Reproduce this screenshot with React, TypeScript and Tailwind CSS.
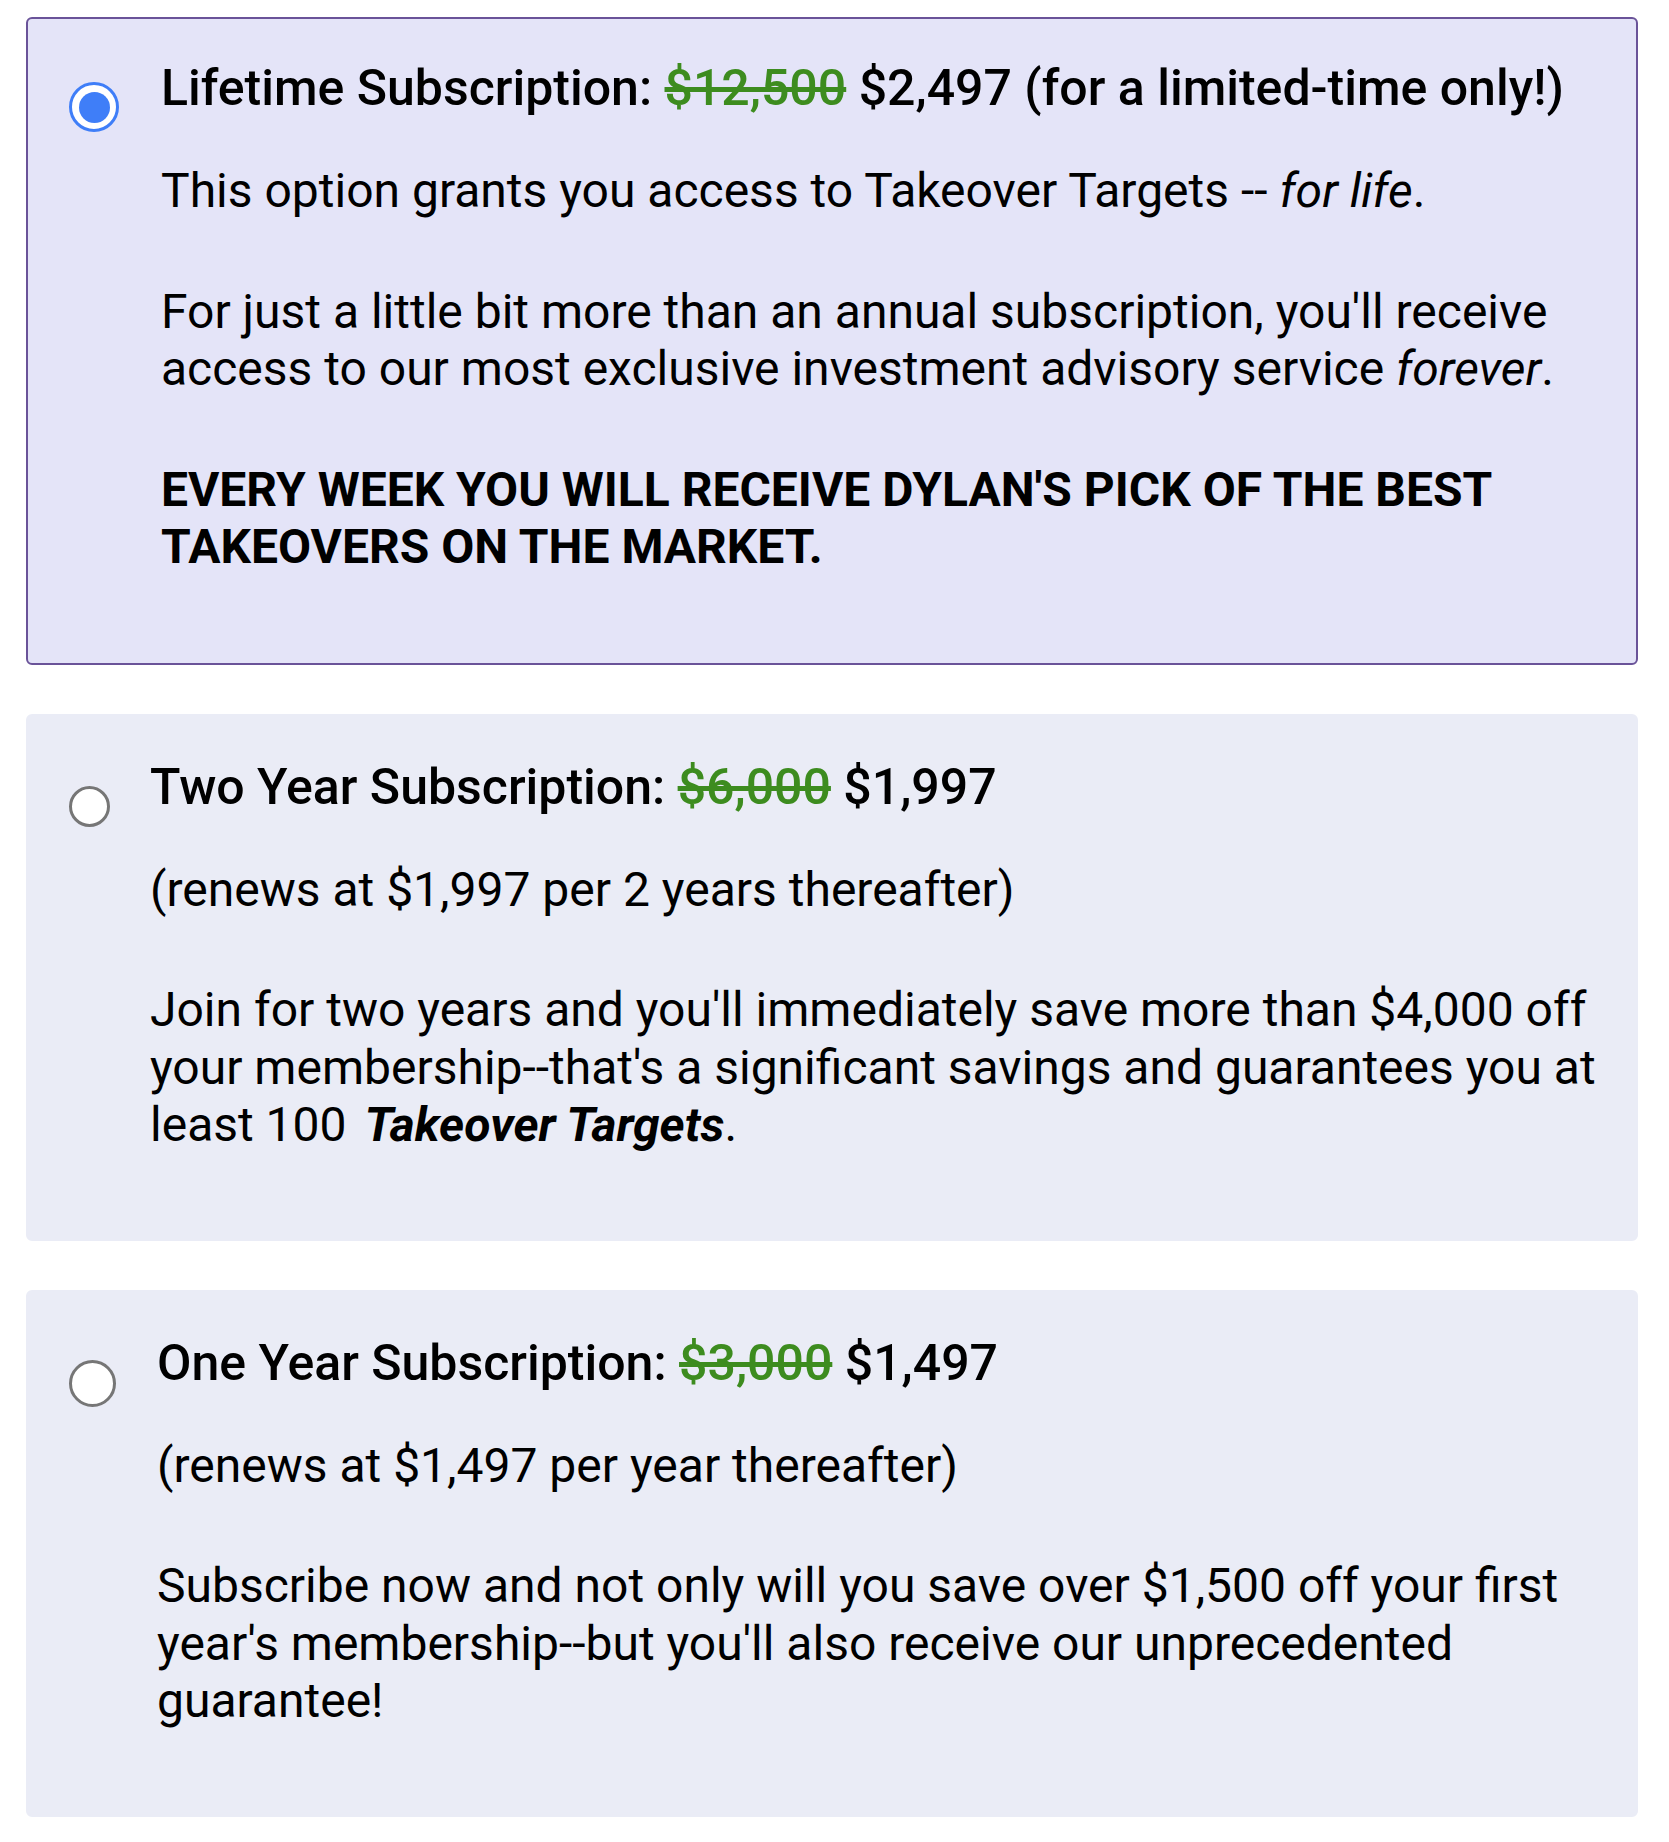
import { useState } from "react";

type Plan = {
  id: string;
  label: string;
  was: string;
  now: string;
  radio: string;
  body: React.ReactNode;
};

const plans: Plan[] = [
  {
    id: "lifetime",
    label: "Lifetime Subscription:",
    was: "$12,500",
    now: "$2,497 (for a limited-time only!)",
    radio: "w-[50px] h-[50px] mt-[23px] mr-[42px]",
    body: (
      <>
        <p>
          This option grants you access to Takeover Targets -- <em>for life</em>.
        </p>
        <p className="mt-[63px]">
          For just a little bit more than an annual subscription, you'll receive access to our most exclusive
          investment advisory service <em>forever</em>.
        </p>
        <p className="mt-[63px] font-bold">
          EVERY WEEK YOU WILL RECEIVE DYLAN'S PICK OF THE BEST TAKEOVERS ON THE MARKET.
        </p>
      </>
    ),
  },
  {
    id: "two-year",
    label: "Two Year Subscription:",
    was: "$6,000",
    now: "$1,997",
    radio: "w-[41px] h-[41px] mt-[28px] mr-[40px]",
    body: (
      <>
        <p>(renews at $1,997 per 2 years thereafter)</p>
        <p className="mt-[63px]">
          Join for two years and you'll immediately save more than $4,000 off your membership--that's a significant
          savings and guarantees you at least 100{" "}
          <strong className="ml-[6px]">
            <em>Takeover Targets</em>
          </strong>
          .
        </p>
      </>
    ),
  },
  {
    id: "one-year",
    label: "One Year Subscription:",
    was: "$3,000",
    now: "$1,497",
    radio: "w-[47px] h-[47px] mt-[26px] mr-[41px]",
    body: (
      <>
        <p>(renews at $1,497 per year thereafter)</p>
        <p className="mt-[63px]">
          Subscribe now and not only will you save over $1,500 off your first year's membership--but you'll also
          receive our unprecedented guarantee!
        </p>
      </>
    ),
  },
];

export default function App() {
  const [selected, setSelected] = useState("lifetime");

  return (
    <div className="bg-white min-h-screen pt-[17px] pl-[26px] pr-[31px] font-['Roboto',sans-serif] text-black">
      <div className="flex flex-col gap-[49px] w-[1612px]">
        {plans.map((plan) => {
          const active = selected === plan.id;
          return (
            <label
              key={plan.id}
              className={
                active
                  ? "flex items-start rounded-[6px] border-2 border-[#6a5399] bg-[#e4e4f8] pl-[41px] pr-[30px] pt-[40px] pb-[87px] cursor-pointer"
                  : "flex items-start rounded-[6px] border-2 border-[#eaecf6] bg-[#eaecf6] pl-[41px] pr-[30px] pt-[42px] pb-[85px] cursor-pointer"
              }
            >
              <span
                className={
                  active
                    ? `${plan.radio} shrink-0 rounded-full border-[3px] border-[#3f7ef8] bg-white flex items-center justify-center`
                    : `${plan.radio} shrink-0 rounded-full border-[3px] border-[#767676] bg-white`
                }
              >
                {active && <span className="w-[31px] h-[31px] rounded-full bg-[#3f7ef8]" />}
              </span>
              <input
                type="radio"
                name="plan"
                className="sr-only"
                checked={active}
                onChange={() => setSelected(plan.id)}
              />
              <div className="flex-1">
                <p className="text-[50px] leading-[58px] font-medium">
                  {plan.label}{" "}
                  <span className="text-[#3d8c1f] line-through">{plan.was}</span> {plan.now}
                </p>
                <div className="mt-[45px] text-[48px] leading-[57.5px]">{plan.body}</div>
              </div>
            </label>
          );
        })}
      </div>
    </div>
  );
}
